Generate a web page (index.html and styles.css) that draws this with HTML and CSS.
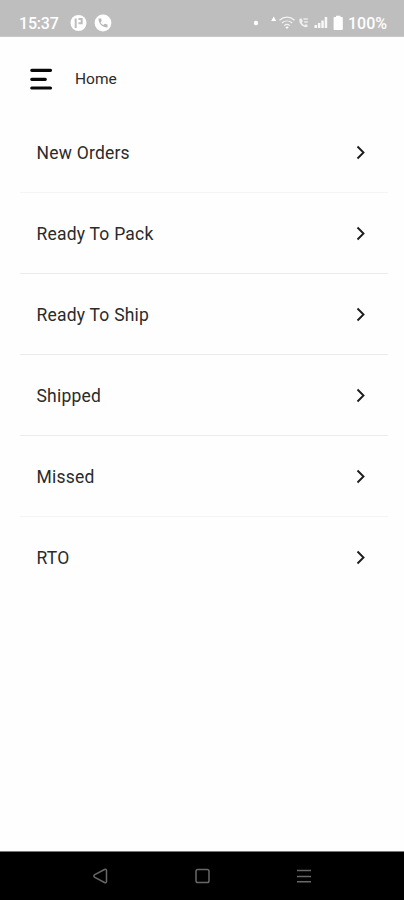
FILE: index.html
```html
<!DOCTYPE html>
<html lang="en">
<head>
<meta charset="utf-8">
<meta name="viewport" content="width=device-width, initial-scale=1">
<title>Home</title>
<link rel="stylesheet" href="styles.css">
</head>
<body>
<div class="status">
  <span class="clock">15:37</span>
  <svg class="notices" width="42" height="18" viewBox="0 0 42 18">
    <circle cx="8.500" cy="9" r="8" fill="#fff"/>
    <path d="M5.700 14V4.500M8.500 5h3.200v4.200H8.500" fill="none" stroke="#bebebe" stroke-width="2"/>
    <circle cx="33" cy="9" r="8.400" fill="#fff"/>
    <path d="M28.500 4.500c0 5.200 3.800 9 9 9v-3l-2.800-.7-1.300 1.300c-1.300-.7-2.200-1.600-2.900-2.900l1.300-1.300-.7-2.400z" fill="#b8b8b8"/>
  </svg>
  <svg class="signals" width="96" height="18" viewBox="0 0 96 18">
    <circle cx="7" cy="9" r="2.200" fill="#fff"/>
    <path d="M22.200 7l2.500-4.500 2.500 4.500z" fill="#fff"/>
    <g fill="none" stroke="#f3f3f3" stroke-width="1.200">
      <path d="M30.500 6.200c4.500-4 10.500-4 15 0M32.800 9c3.100-2.700 7.300-2.700 10.400 0M35.200 11.600c1.700-1.400 3.900-1.400 5.600 0"/>
    </g>
    <path d="M36.300 13l1.700 2 1.700-2q-1.700-1-3.400 0z" fill="#fff"/>
    <path d="M50.600 4.500c-1.600 4.500 3 9.500 7.900 8.500v-2.200l-2.200-.6-1 1c-1.300-.7-2-1.700-2.400-2.700l.9-1-.7-2.700z" fill="#eee"/>
    <path d="M54.500 5h4.300M55.200 8h3.500" stroke="#ececec" stroke-width="1.300"/>
    <path d="M65.500 11h2.500v3h-2.500zM68.900 9h2.500v5h-2.500zM72.300 6.500h2.500V14h-2.500zM75.700 3h2.500v11h-2.500z" fill="#f8f8f8"/>
    <path d="M87 3V1.800h4.500V3h1.500q.8 0 .8.900v11.200q0 .9-.8.900h-7.600q-.8 0-.8-.9V3.900q0-.9.800-.9z" fill="#fff"/>
  </svg>
  <span class="charge">100%</span>
</div>
<header class="appbar">
  <svg width="24" height="24" viewBox="0 0 24 24" fill="none" stroke="#080808" stroke-width="3.200" stroke-linecap="round">
    <path d="M2.800 3.300h18.700M2.800 12.300h13.500M2.800 21h18.700"/>
  </svg>
  <h1>Home</h1>
</header>
<main>
  <a class="row"><span>New Orders</span><svg class="chev" width="10" height="14" viewBox="0 0 10 14"><path d="M1.500 .5l6 6-6 6"/></svg></a>
  <a class="row"><span>Ready To Pack</span><svg class="chev" width="10" height="14" viewBox="0 0 10 14"><path d="M1.500 .5l6 6-6 6"/></svg></a>
  <a class="row"><span>Ready To Ship</span><svg class="chev" width="10" height="14" viewBox="0 0 10 14"><path d="M1.500 .5l6 6-6 6"/></svg></a>
  <a class="row"><span>Shipped</span><svg class="chev" width="10" height="14" viewBox="0 0 10 14"><path d="M1.500 .5l6 6-6 6"/></svg></a>
  <a class="row"><span>Missed</span><svg class="chev" width="10" height="14" viewBox="0 0 10 14"><path d="M1.500 .5l6 6-6 6"/></svg></a>
  <a class="row"><span>RTO</span><svg class="chev" width="10" height="14" viewBox="0 0 10 14"><path d="M1.500 .5l6 6-6 6"/></svg></a>
</main>
<nav class="sysnav">
  <svg width="16" height="16" viewBox="0 0 16 16"><path d="M12.500 1.500Q14.500 .8 14.500 2.500v11q0 1.700-2 1L2.800 9.300Q.8 8 2.800 6.700z"/></svg>
  <svg width="16" height="16" viewBox="0 0 16 16"><rect x="2" y="1.500" width="13" height="13" rx="1.800"/></svg>
  <svg width="16" height="16" viewBox="0 0 16 16"><path d="M1 2.500h14M1 8.500h14M1 13.700h14"/></svg>
</nav>
</body>
</html>
```
FILE: styles.css
```css
* { box-sizing: border-box; }
body {
  margin: 0;
  height: 900px;
  display: flex;
  flex-direction: column;
  background: #fefefe;
  color: #2b2b2b;
  font-family: Roboto, sans-serif;
  overflow: hidden;
}
svg { display: block; flex: none; overflow: visible; }
.status {
  height: 37px;
  padding: 10px 17px 0 19px;
  display: flex;
  align-items: flex-start;
  background: #bebebe;
  border-bottom: 1px solid #c9c9c9;
  color: #fff;
  font-size: 16px;
  font-weight: 500;
  line-height: 27px;
}
.clock { letter-spacing: -0.2px; }
.notices { margin: 4px 0 0 11px; }
.signals { margin: 4px 3px 0 auto; }
.appbar {
  height: 75px;
  padding: 30px 30px 0 29px;
  display: flex;
  gap: 22px;
}
.appbar h1 {
  margin: 0;
  font-size: 15.500px;
  font-weight: 400;
  line-height: 24px;
}
main { flex: 1; }
.row {
  height: 81px;
  margin: 0 16px 0 20px;
  padding: 1px 22px 0 16.500px;
  display: flex;
  align-items: center;
  justify-content: space-between;
  border-bottom: 1px solid #ebebeb;
  font-size: 17.500px;
  letter-spacing: 0.220px;
}
.row:first-child, .row:nth-child(5) { border-color: #f5f5f5; }
.row:last-child { border-color: transparent; }
.chev path { fill: none; stroke: #1c1c1c; stroke-width: 1.900; }
.sysnav {
  height: 49px;
  padding: 0 92px 1px;
  display: flex;
  align-items: center;
  justify-content: space-between;
  background: #000;
  border-top: 1px solid #777;
}
.sysnav path, .sysnav rect { fill: none; stroke: #686868; stroke-width: 1.500; }
```
